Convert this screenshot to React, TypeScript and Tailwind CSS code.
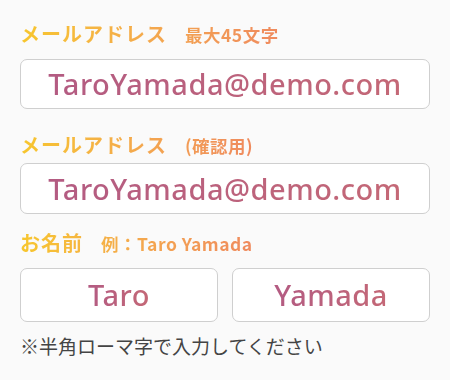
const labelFont = { fontFamily: '"Noto Sans CJK JP", "Noto Sans", sans-serif' };
const valueFont = { fontFamily: '"Noto Sans", "Noto Sans CJK JP", sans-serif' };

interface LabelProps {
  title: string;
  note: string;
  className?: string;
}

const Label = ({ title, note, className = "" }: LabelProps) => (
  <div className={`flex h-[28px] items-center ${className}`} style={labelFont}>
    <span className="inline-flex items-baseline bg-gradient-to-r from-[#f7c62c] to-[#ef8a5e] bg-clip-text font-bold text-transparent">
      <span className="text-[20px] tracking-[1px]">{title}</span>
      <span className="ml-[18px] text-[17.5px] tracking-[0.5px]">{note}</span>
    </span>
  </div>
);

const Field = ({ value, className = "" }: { value: string; className?: string }) => (
  <div
    className={`flex items-center justify-center rounded-[7px] border-[1.5px] border-[#cfcfcf] bg-white ${className}`}
  >
    <span
      className="bg-gradient-to-r from-[#b35b82] to-[#c46876] bg-clip-text text-[29px] font-medium tracking-[0.5px] text-transparent"
      style={valueFont}
    >
      {value}
    </span>
  </div>
);

export default function App() {
  return (
    <div className="min-h-[380px] w-[450px] bg-[#fafafa] px-[20px] pt-[20px]">
      <Label title="メールアドレス" note="最大45文字" />
      <Field value="TaroYamada@demo.com" className="mt-[11px] h-[50px]" />
      <Label title="メールアドレス" note="(確認用)" className="mt-[22px]" />
      <Field value="TaroYamada@demo.com" className="mt-[4px] h-[51px]" />
      <Label title="お名前" note="例：Taro Yamada" className="mt-[15px]" />
      <div className="mt-[11px] grid grid-cols-2 gap-[14px]">
        <Field value="Taro" className="h-[54px]" />
        <Field value="Yamada" className="h-[54px]" />
      </div>
      <p className="mt-[10px] text-[19px] leading-[28px] text-[#444]" style={labelFont}>
        ※半角ローマ字で入力してください
      </p>
    </div>
  );
}
